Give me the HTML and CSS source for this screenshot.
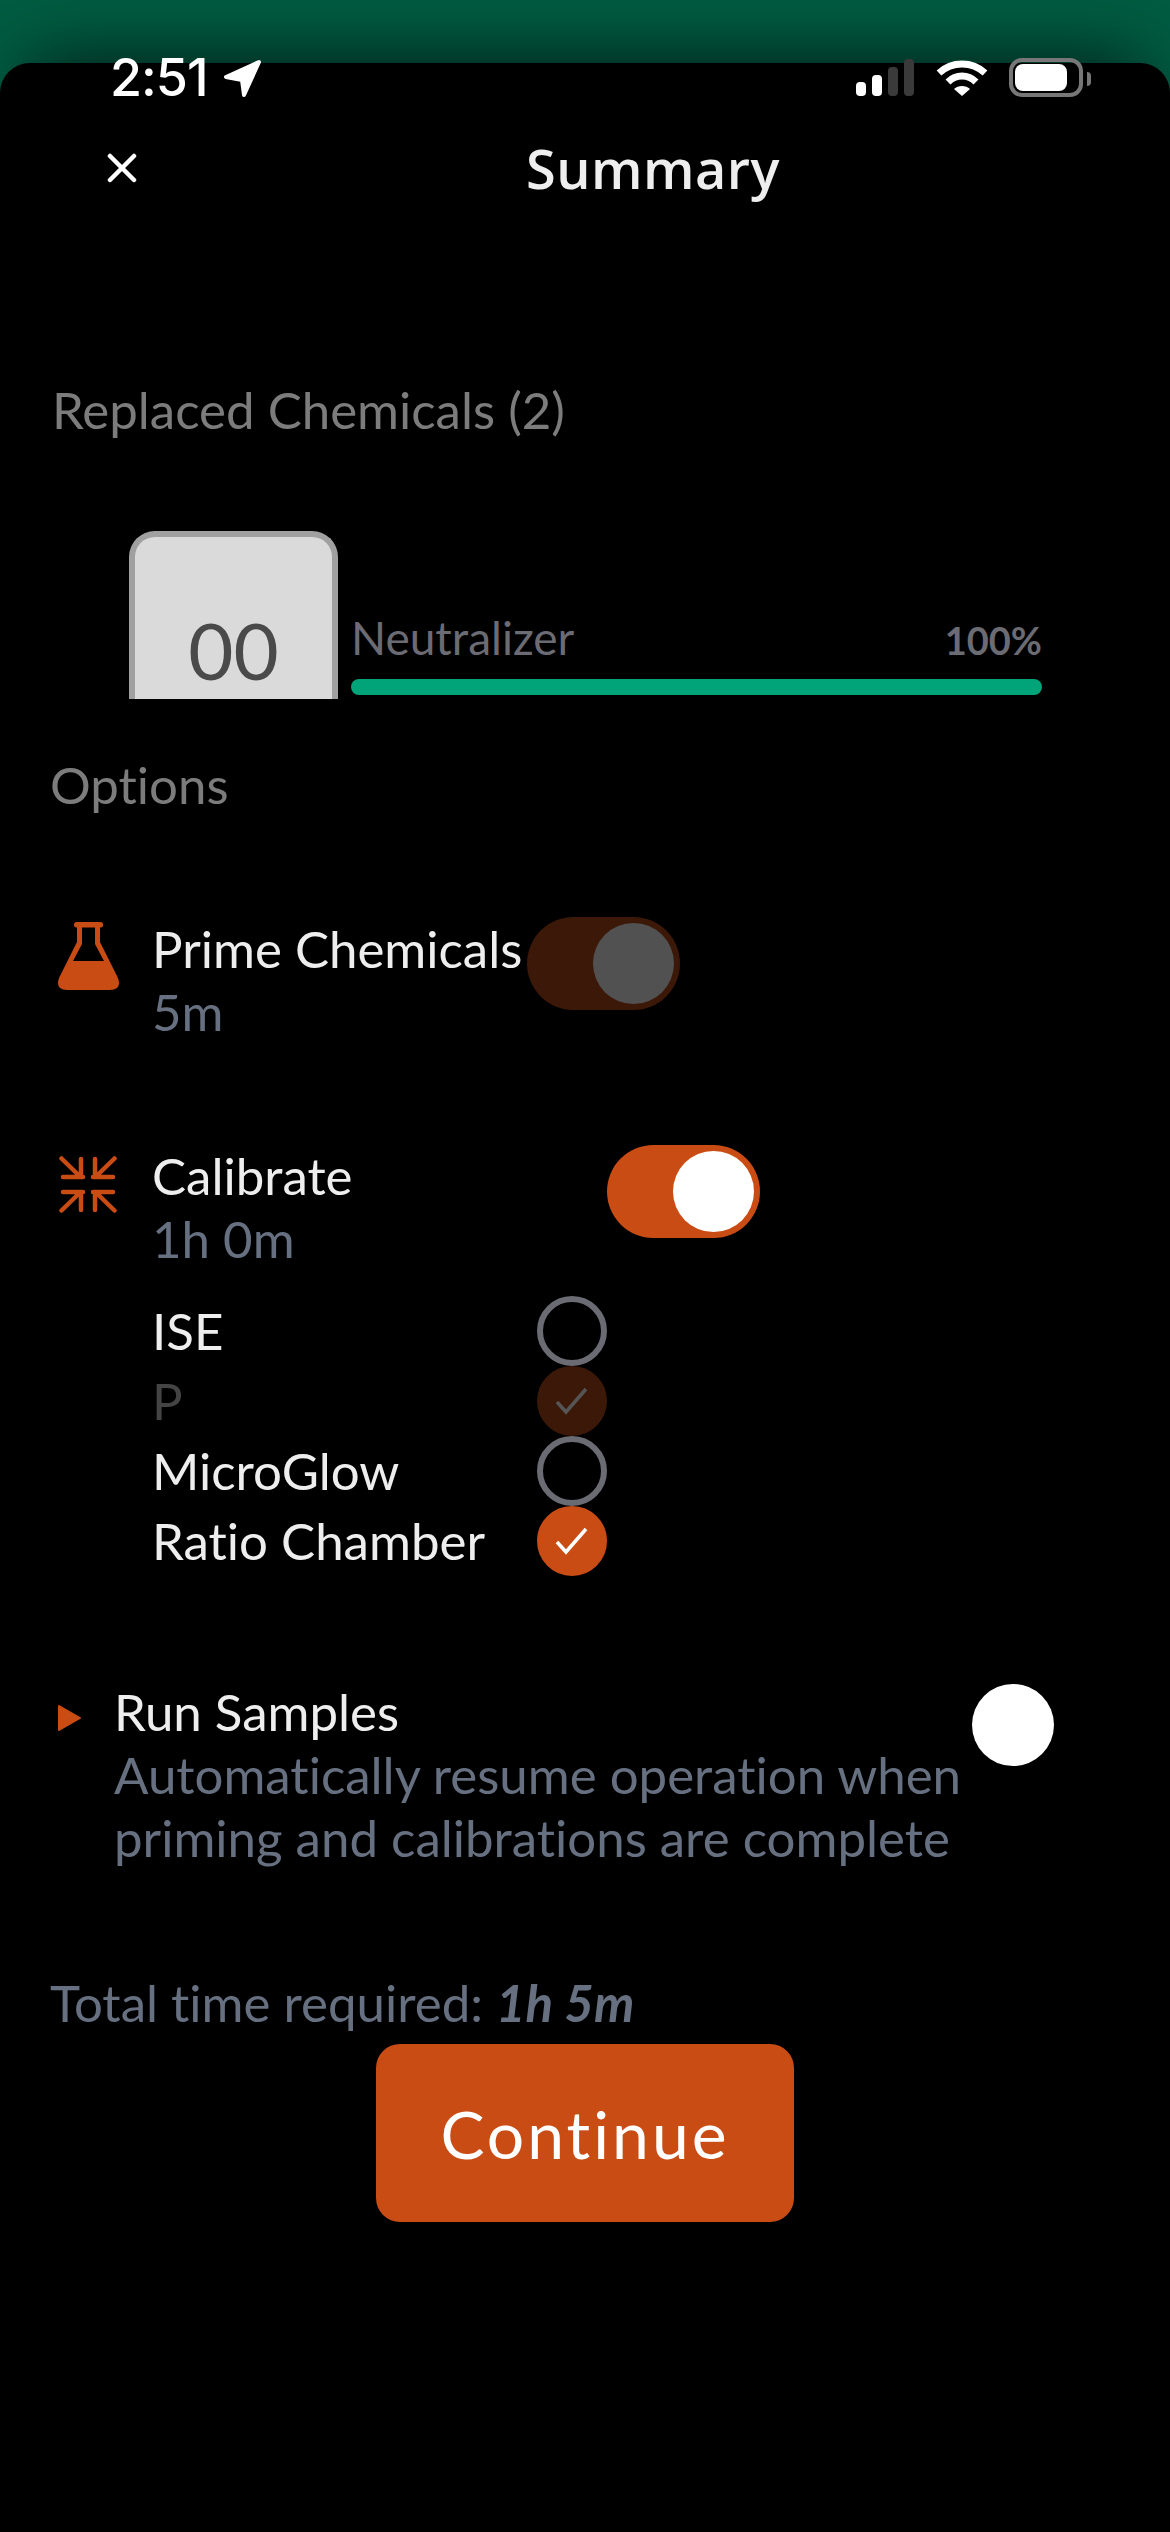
FILE: index.html
```html
<!DOCTYPE html>
<html lang="en">
<head>
<meta charset="utf-8">
<title>Summary</title>
<link rel="stylesheet" href="styles.css">
</head>
<body>
<div class="status">
  <span class="time">2:51</span>
  <svg class="loc" viewBox="0 0 38 38"><path d="M35 3 2 18 18 21 20 36Z" fill="#fff" stroke="#fff" stroke-width="4" stroke-linejoin="round"/></svg>
  <span class="status-gap"></span>
  <svg class="signal" viewBox="0 0 58 38"><rect x="0" y="23" width="10" height="14" rx="4" fill="#fff"/><rect x="16" y="16" width="10" height="21" rx="4" fill="#fff"/><rect x="32" y="8" width="10" height="29" rx="4" fill="#3a3a3a"/><rect x="48" y="0" width="10" height="37" rx="4" fill="#3a3a3a"/></svg>
  <svg class="wifi" viewBox="0 0 52 38"><path d="M3 14C16 2 36 2 49 14" fill="none" stroke="#fff" stroke-width="7"/><path d="M12 23C20 15 32 15 40 23" fill="none" stroke="#fff" stroke-width="7"/><path d="M18 30C22 26 30 26 34 30L26 37Z" fill="#fff"/></svg>
  <div class="battery"><div class="battery-fill"></div></div>
  <div class="battery-cap"></div>
</div>
<main class="sheet">
  <header class="header">
    <svg class="close" viewBox="0 0 30 30"><path d="M3 3 27 27M27 3 3 27" stroke="#fff" stroke-width="4.5" stroke-linecap="round"/></svg>
    <h1 class="title">Summary</h1>
  </header>
  <h2 class="heading replaced">Replaced Chemicals (2)</h2>
  <section class="chem">
    <div class="cart"><span class="cart-num">00</span></div>
    <div class="chem-info">
      <div class="chem-labels"><span class="chem-name">Neutralizer</span><span class="chem-pct">100%</span></div>
      <div class="bar"></div>
    </div>
  </section>
  <h2 class="heading options">Options</h2>
  <section class="row prime">
    <svg class="flask" viewBox="0 0 63 68"><rect x="17" y="0" width="29" height="5.500" rx="2.500" fill="#c94c14"/><path fill-rule="evenodd" fill="#c94c14" d="M20 5V20L2 56Q-2 68 10 68H53Q65 68 61 56L43 20V5ZM25 5H38V22L47 39H16L25 22Z"/></svg>
    <div class="row-text">
      <div class="label">Prime Chemicals</div>
      <div class="sub">5m</div>
    </div>
    <div class="toggle toggle-off"><div class="thumb"></div></div>
  </section>
  <section class="row calibrate">
    <svg class="arrows" viewBox="0 0 58 57">
      <g fill="none" stroke="#c94c14" stroke-width="4.500" stroke-linecap="round">
        <path d="M2.500 2.500 19.500 19M22 3V19M4 21H24"/>
        <path d="M55.500 2.500 38.500 19M36 3V19M54 21H34"/>
        <path d="M2.500 54.500 19.500 38M22 54V38M4 36H24"/>
        <path d="M55.500 54.500 38.500 38M36 54V38M54 36H34"/>
      </g>
    </svg>
    <div class="row-text wide">
      <div class="label">Calibrate</div>
      <div class="sub">1h 0m</div>
    </div>
    <div class="toggle toggle-on"><div class="thumb"></div></div>
  </section>
  <ul class="checks">
    <li class="check-row"><span class="check-label">ISE</span><span class="circle"></span></li>
    <li class="check-row"><span class="check-label dim">P</span><span class="circle circle-dim"><svg class="tick" viewBox="0 0 34 28"><path d="M2 15 11 25 31 2" fill="none" stroke="#555" stroke-width="3.500"/></svg></span></li>
    <li class="check-row"><span class="check-label">MicroGlow</span><span class="circle"></span></li>
    <li class="check-row"><span class="check-label">Ratio Chamber</span><span class="circle circle-on"><svg class="tick" viewBox="0 0 34 28"><path d="M2 15 11 25 31 2" fill="none" stroke="#fff" stroke-width="3.500"/></svg></span></li>
  </ul>
  <section class="run">
    <svg class="play" viewBox="0 0 25 28"><path d="M2 2 23 14 2 26Z" fill="#c94c14" stroke="#c94c14" stroke-width="2" stroke-linejoin="round"/></svg>
    <div class="run-text">
      <div class="label">Run Samples</div>
      <div class="sub">Automatically resume operation when<br>priming and calibrations are complete</div>
    </div>
    <div class="run-dot"></div>
  </section>
  <p class="total">Total time required: <b class="total-val">1h 5m</b></p>
  <div class="actions"><button class="continue">Continue</button></div>
</main>
</body>
</html>
```
FILE: styles.css
```css
* { box-sizing: border-box; }
html, body { margin: 0; padding: 0; }
body {
  position: relative;
  width: 1170px;
  height: 2532px;
  overflow: hidden;
  padding-top: 63px;
  background: #005c42;
  font-family: "Lato", sans-serif;
  font-variant-ligatures: none;
  color: #eee;
}
.status {
  position: absolute;
  top: 58px;
  left: 110px;
  width: 981px;
  height: 40px;
  display: flex;
  align-items: flex-start;
  z-index: 2;
}
.time {
  font-family: "Inter", sans-serif;
  font-size: 52px;
  font-weight: 500;
  line-height: 40px;
  color: #fff;
  letter-spacing: -1px;
}
.loc { width: 38px; height: 38px; margin-left: 16px; margin-top: 1px; }
.status-gap { flex: 1; }
.signal { width: 58px; height: 38px; margin-top: 1px; }
.wifi { width: 52px; height: 38px; margin-left: 22px; margin-top: 1px; }
.battery {
  width: 74px;
  height: 39px;
  margin-left: 21px;
  border: 4px solid #777;
  border-radius: 13px;
  padding: 2px;
}
.battery-fill { width: 52px; height: 27px; background: #fff; border-radius: 8px; }
.battery-cap {
  width: 4px;
  height: 14px;
  margin-left: 4px;
  margin-top: 14px;
  background: #777;
  border-radius: 0 4px 4px 0;
}
.sheet {
  background: #000;
  height: 2469px;
  border-radius: 30px 30px 0 0;
  box-shadow: 0 -30px 70px -30px rgba(0, 0, 0, 0.75);
  overflow: hidden;
}
.header {
  height: 210px;
  display: flex;
  align-items: center;
  position: relative;
  justify-content: center;
}
.close { position: absolute; left: 107px; top: 90px; width: 30px; height: 30px; }
.title {
  margin: 0 0 0 136px;
  font-family: "Open Sans", sans-serif;
  font-size: 54px;
  font-weight: 600;
  letter-spacing: 0.5px;
  color: #eee;
  line-height: 63px;
}
.heading {
  margin: 0;
  font-size: 51px;
  font-weight: 400;
  line-height: 63px;
  color: #7c7c7c;
}
.replaced { margin-top: 105px; padding-left: 52px; }
.options { margin-top: 54px; padding-left: 50px; }
.chem {
  margin-top: 90px;
  margin-left: 129px;
  height: 168px;
  display: flex;
  gap: 13px;
  align-items: flex-end;
  overflow: hidden;
}
.cart {
  width: 209px;
  height: 168px;
  flex: none;
  background: #dadada;
  border: 6px solid #a0a0a0;
  border-bottom: 0;
  border-radius: 26px 26px 0 0;
  display: flex;
  justify-content: center;
  padding-top: 63px;
}
.cart-num { font-size: 78px; line-height: 100px; color: #4a4a4a; }
.chem-info { width: 691px; padding-bottom: 4px; }
.chem-labels { display: flex; justify-content: space-between; align-items: baseline; }
.chem-name { font-size: 46px; line-height: 56px; color: #6b6b74; }
.chem-pct { font-size: 38px; font-weight: 700; line-height: 56px; color: #6b6b74; }
.bar { height: 16px; margin-top: 11px; background: #00a478; border-radius: 8px; }
.row { display: flex; align-items: flex-start; }
.prime { margin-top: 102px; }
.calibrate { margin-top: 102px; }
.flask { width: 63px; height: 68px; flex: none; margin: 4px 32px 0 57px; }
.arrows { width: 58px; height: 57px; flex: none; margin: 11px 35px 0 59px; }
.label { font-size: 51px; line-height: 63px; color: #eee; }
.sub { font-size: 51px; line-height: 63px; color: #667080; }
.row-text { white-space: nowrap; margin-top: -1px; }
.wide { width: 455px; }
.toggle {
  width: 153px;
  height: 93px;
  border-radius: 47px;
  padding: 6px;
  display: flex;
  justify-content: flex-end;
  flex: none;
}
.prime .toggle { margin-top: -1px; margin-left: 5px; }
.toggle-off { background: #3b1808; }
.toggle-on { background: #c94c14; }
.thumb { width: 81px; height: 81px; border-radius: 50%; background: #fff; }
.toggle-off .thumb { background: #515151; }
.checks { list-style: none; margin: 26px 0 0 152px; padding: 0; }
.check-row { display: flex; align-items: center; height: 70px; }
.check-label { width: 385px; font-size: 51px; line-height: 70px; color: #eee; }
.dim { color: #444; }
.circle {
  width: 70px;
  height: 70px;
  border-radius: 50%;
  border: 6px solid #6b6b74;
  display: flex;
  align-items: center;
  justify-content: center;
}
.circle-dim { background: #3b1808; border-color: #3b1808; }
.circle-on { background: #c94c14; border-color: #c94c14; }
.tick { width: 34px; height: 28px; }
.run { display: flex; align-items: flex-start; margin-top: 105px; }
.play { width: 25px; height: 28px; flex: none; margin: 23px 32px 0 57px; }
.run-text { width: 858px; white-space: nowrap; margin-top: -1px; }
.run-dot {
  width: 82px;
  height: 82px;
  border-radius: 50%;
  background: #fff;
  flex: none;
  margin-top: 3px;
}
.total { margin: 102px 0 0 50px; font-size: 51px; line-height: 63px; color: #667080; }
.total-val { font-style: italic; font-weight: 700; }
.actions { display: flex; margin: 10px 0 0 376px; }
.continue {
  width: 418px;
  height: 178px;
  border: 0;
  border-radius: 24px;
  background: #c94c14;
  color: #fff;
  font-family: "Lato", sans-serif;
  font-size: 66px;
  letter-spacing: 3px;
}
```
